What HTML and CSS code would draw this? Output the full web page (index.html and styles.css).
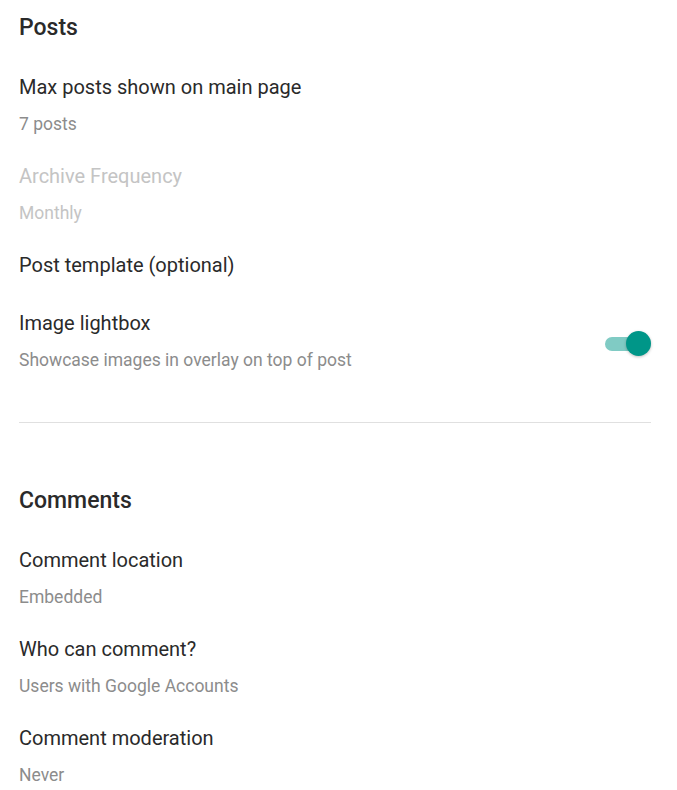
FILE: index.html
```html
<!DOCTYPE html>
<html lang="en">
<head>
    <meta charset="UTF-8">
    <meta name="viewport" content="width=device-width, initial-scale=1.0">
    <title>Settings</title>
    <link rel="stylesheet" href="styles.css">
</head>
<body>
    <div class="settings">
        <section class="section section-first">
            <h2 class="section-title">Posts</h2>
            <div class="item">
                <div class="item-title">Max posts shown on main page</div>
                <div class="item-value">7 posts</div>
            </div>
            <div class="item disabled">
                <div class="item-title">Archive Frequency</div>
                <div class="item-value">Monthly</div>
            </div>
            <div class="item item-single">
                <div class="item-title">Post template (optional)</div>
            </div>
            <div class="item item-row">
                <div class="item-text">
                    <div class="item-title">Image lightbox</div>
                    <div class="item-value">Showcase images in overlay on top of post</div>
                </div>
                <span class="switch">
                    <span class="switch-track"></span>
                    <span class="switch-thumb"></span>
                </span>
            </div>
        </section>

        <hr class="divider">

        <section class="section">
            <h2 class="section-title">Comments</h2>
            <div class="item">
                <div class="item-title">Comment location</div>
                <div class="item-value">Embedded</div>
            </div>
            <div class="item">
                <div class="item-title">Who can comment?</div>
                <div class="item-value">Users with Google Accounts</div>
            </div>
            <div class="item">
                <div class="item-title">Comment moderation</div>
                <div class="item-value">Never</div>
            </div>
        </section>
    </div>
</body>
</html>
```

FILE: styles.css
```css
body {
    margin: 0;
    font-family: Roboto, "Liberation Sans", Arial, sans-serif;
    background-color: #FFFFFF;
    color: #212121;
}
.settings {
    padding: 0 26px 0 19px;
}
.section {
    padding-top: 63px;
}
.section-first {
    padding-top: 13px;
}
.section-title {
    margin: 0 0 17px;
    font-size: 23px;
    font-weight: 500;
    line-height: 30px;
    color: #2a2a2a;
}
.item {
    padding: 14px 0;
}
.item-single {
    padding: 14px 0 18px;
}
.item-title {
    font-size: 20px;
    line-height: 26px;
    color: #2a2a2a;
}
.item-value {
    margin-top: 13px;
    font-size: 17.5px;
    line-height: 22px;
    color: #8c8c8c;
}
.disabled .item-title,
.disabled .item-value {
    color: #c4c4c4;
}
.item-row {
    display: flex;
    align-items: center;
    justify-content: space-between;
}
/* toggle switch, on */
.switch {
    position: relative;
    display: inline-block;
    width: 47px;
    height: 26px;
    margin-top: 6px;
}
.switch-track {
    position: absolute;
    left: 1px;
    top: 6px;
    width: 38px;
    height: 14px;
    border-radius: 7px;
    background-color: #80CBC4;
}
.switch-thumb {
    position: absolute;
    right: 0;
    top: 0;
    width: 25px;
    height: 25px;
    border-radius: 50%;
    background-color: #009688;
    box-shadow: 0 1px 3px rgba(0, 0, 0, 0.25);
}
.divider {
    margin: 37px 0 0;
    border: none;
    border-top: 1px solid #e0e0e0;
}
```
